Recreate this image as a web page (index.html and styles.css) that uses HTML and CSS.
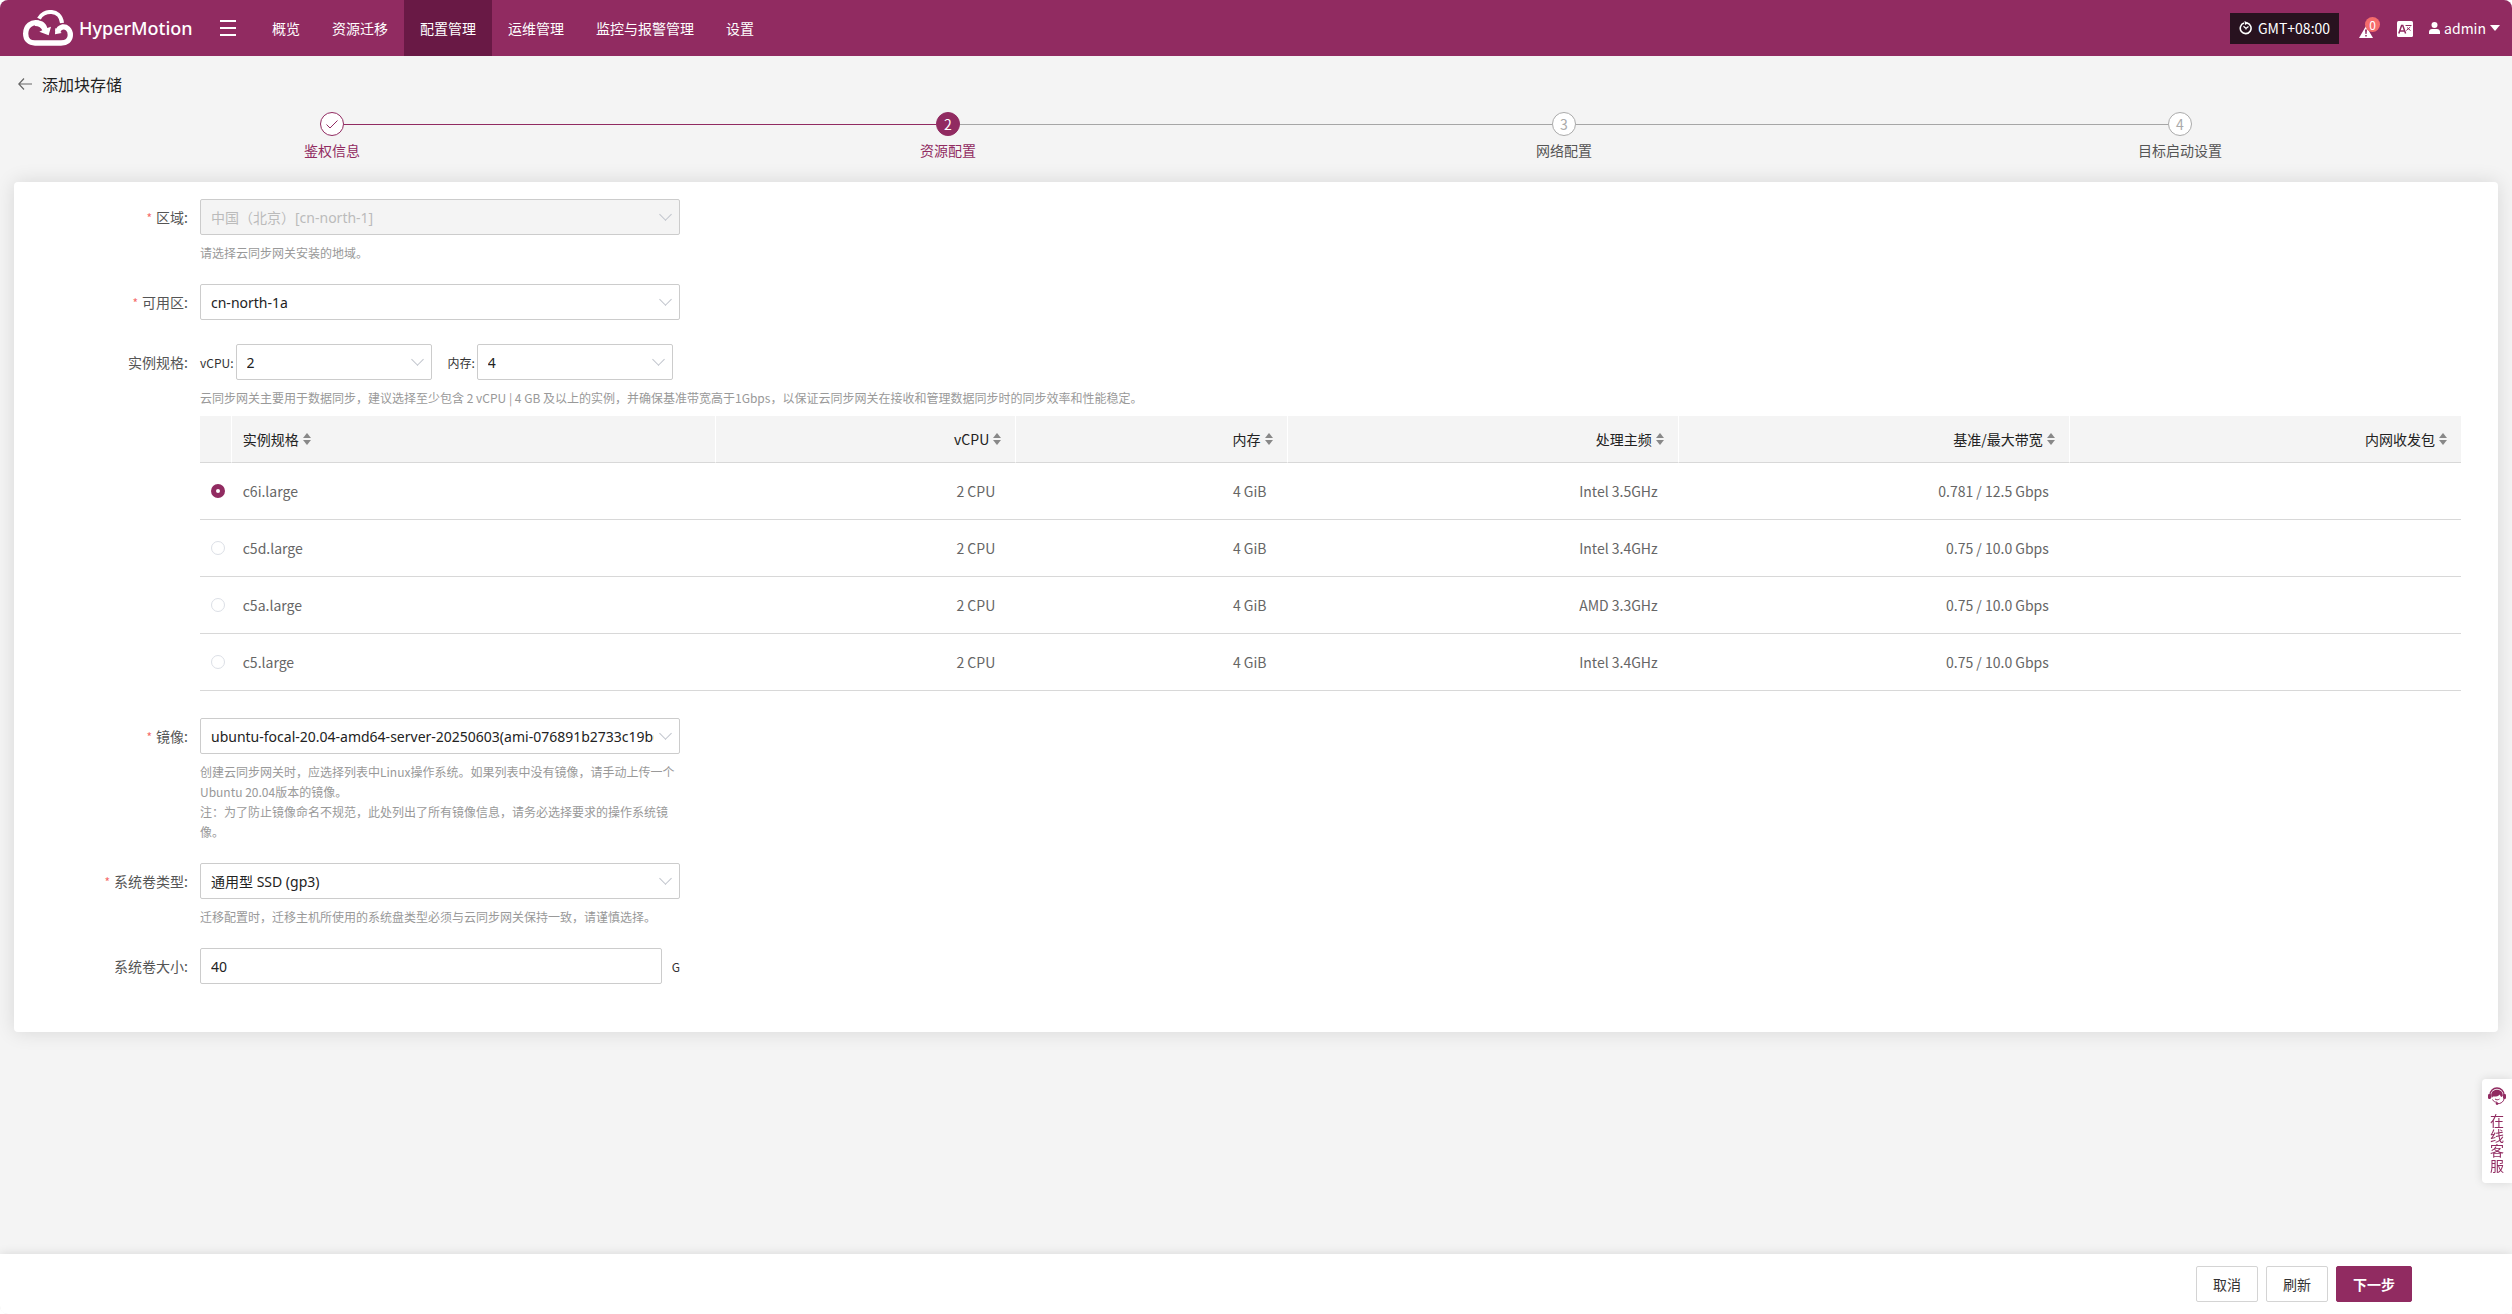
FILE: index.html
```
<!DOCTYPE html>
<html lang="zh-CN">
<head>
<meta charset="UTF-8">
<meta name="viewport" content="width=device-width, initial-scale=1.0">
<title>HyperMotion</title>
<link rel="stylesheet" href="styles.css">
</head>
<body>
<div class="app">
  <header class="header">
    <a class="logo" href="#">
      <svg width="50" height="36" viewBox="0 0 150 108" fill="none" stroke="#fff">
        <path d="M48 26C60 0 112-6 117 39" stroke-width="12"/>
        <path d="M46 39C26 34 8 48 8 71C8 88 19 99 36 99H114C131 99 142 90 142 75C142 58 130 49 118 51C110 53 106 58 104 65" stroke-width="16"/>
        <path d="M36 31C56 28 70 40 73 54L84 50L77 76L49 65L58 61C54 52 46 48 36 48Z" fill="#fff" stroke="none"/>
        <path d="M97 54L96 73L116 69Z" fill="#fff" stroke="none"/>
      </svg>
      <span>HyperMotion</span>
    </a>
    <button class="menu-btn" aria-label="菜单"><i></i><i></i><i></i></button>
    <nav class="nav">
      <a href="#">概览</a>
      <a href="#">资源迁移</a>
      <a href="#" class="active">配置管理</a>
      <a href="#">运维管理</a>
      <a href="#">监控与报警管理</a>
      <a href="#">设置</a>
    </nav>
    <div class="header-right">
      <button class="timezone">
        <svg width="14" height="14" viewBox="0 0 14 14" fill="none" stroke="#fff">
          <path d="M8 2A5.4 5.4 0 1 1 5 2.1" stroke-width="1.6"/>
          <path d="M5.5 0L9.5 2L6 4Z" fill="#fff" stroke="none"/>
          <path d="M4.5 5.2L7 7.5L9.5 5.5M7 7.5V8.5" stroke-width="1.2"/>
        </svg>
        GMT+08:00
      </button>
      <button class="alarm" aria-label="报警">
        <svg width="14" height="12" viewBox="0 0 14 12">
          <path d="M7 0L14 12H0Z" fill="#fff"/>
          <path d="M6 3.5H8L7.6 8H6.4ZM6.2 9H7.8V10.6H6.2Z" fill="#912b61"/>
        </svg>
        <span class="badge">0</span>
      </button>
      <button class="lang" aria-label="语言">
        <svg width="16" height="16" viewBox="0 0 16 16">
          <rect width="16" height="16" rx="1.5" fill="#fff"/>
          <path d="M1.8 12.5L4.6 4.5H5.8L8.6 12.5M2.8 10H7.6" fill="none" stroke="#912b61" stroke-width="1.5"/>
          <path d="M8.5 4.5H14.5M10 6.5L13.5 9.5M13.3 6L9.3 9.5" fill="none" stroke="#912b61"/>
        </svg>
      </button>
      <button class="user">
        <svg width="11" height="12" viewBox="0 0 11 12" fill="#fff">
          <circle cx="5.5" cy="3" r="3"/>
          <path d="M0 12V10C0 8 1.5 7 3 7H8C9.5 7 11 8 11 10V12Z"/>
        </svg>
        admin
        <i class="caret"></i>
      </button>
    </div>
  </header>

  <main class="main">
    <div class="page-title">
      <a href="#" class="back" aria-label="返回">
        <svg width="14" height="12" viewBox="0 0 14 12" fill="none" stroke="#666" stroke-width="1.2">
          <path d="M6 .5L.8 6L6 11.5M.8 6H14"/>
        </svg>
      </a>
      <h1>添加块存储</h1>
    </div>

    <ol class="steps">
      <li class="step done">
        <span class="step-icon">
          <svg width="12" height="9" viewBox="0 0 12 9" fill="none" stroke="#912b61"><path d="M.5 4.5L4 8L11.5 .5"/></svg>
        </span>
        <span class="step-title">鉴权信息</span>
      </li>
      <li class="step current">
        <span class="step-icon">2</span>
        <span class="step-title">资源配置</span>
      </li>
      <li class="step">
        <span class="step-icon">3</span>
        <span class="step-title">网络配置</span>
      </li>
      <li class="step">
        <span class="step-icon">4</span>
        <span class="step-title">目标启动设置</span>
      </li>
    </ol>

    <form class="card" id="storage-form">
      <div class="form-item">
        <label class="form-label required" for="region">区域:</label>
        <div class="form-content">
          <div class="select"><select id="region" disabled><option>中国（北京）[cn-north-1]</option></select></div>
          <p class="help">请选择云同步网关安装的地域。</p>
        </div>
      </div>

      <div class="form-item">
        <label class="form-label required" for="zone">可用区:</label>
        <div class="form-content">
          <div class="select"><select id="zone"><option>cn-north-1a</option></select></div>
        </div>
      </div>

      <div class="form-item">
        <span class="form-label">实例规格:</span>
        <div class="form-content">
          <div class="spec-filter">
            <label for="vcpu">vCPU:</label>
            <div class="select small"><select id="vcpu"><option>2</option></select></div>
            <label for="memory">内存:</label>
            <div class="select small"><select id="memory"><option>4</option></select></div>
          </div>
          <p class="help wide">云同步网关主要用于数据同步，建议选择至少包含 2 vCPU | 4 GB 及以上的实例，并确保基准带宽高于1Gbps，以保证云同步网关在接收和管理数据同步时的同步效率和性能稳定。</p>
          <table class="spec-table">
            <colgroup>
              <col>
              <col class="col-name">
              <col class="col-cpu">
              <col class="col-mem">
              <col class="col-wide">
              <col class="col-wide">
              <col class="col-wide">
            </colgroup>
            <thead>
              <tr>
                <th></th>
                <th>实例规格<i class="sort"></i></th>
                <th>vCPU<i class="sort"></i></th>
                <th>内存<i class="sort"></i></th>
                <th>处理主频<i class="sort"></i></th>
                <th>基准/最大带宽<i class="sort"></i></th>
                <th>内网收发包<i class="sort"></i></th>
              </tr>
            </thead>
            <tbody>
              <tr>
                <td><input type="radio" name="spec" id="c6i" checked></td>
                <td><label for="c6i">c6i.large</label></td>
                <td>2 CPU</td>
                <td>4 GiB</td>
                <td>Intel 3.5GHz</td>
                <td>0.781 / 12.5 Gbps</td>
                <td></td>
              </tr>
              <tr>
                <td><input type="radio" name="spec" id="c5d"></td>
                <td><label for="c5d">c5d.large</label></td>
                <td>2 CPU</td>
                <td>4 GiB</td>
                <td>Intel 3.4GHz</td>
                <td>0.75 / 10.0 Gbps</td>
                <td></td>
              </tr>
              <tr>
                <td><input type="radio" name="spec" id="c5a"></td>
                <td><label for="c5a">c5a.large</label></td>
                <td>2 CPU</td>
                <td>4 GiB</td>
                <td>AMD 3.3GHz</td>
                <td>0.75 / 10.0 Gbps</td>
                <td></td>
              </tr>
              <tr>
                <td><input type="radio" name="spec" id="c5"></td>
                <td><label for="c5">c5.large</label></td>
                <td>2 CPU</td>
                <td>4 GiB</td>
                <td>Intel 3.4GHz</td>
                <td>0.75 / 10.0 Gbps</td>
                <td></td>
              </tr>
            </tbody>
          </table>
        </div>
      </div>

      <div class="form-item">
        <label class="form-label required" for="image">镜像:</label>
        <div class="form-content">
          <div class="select"><select id="image"><option>ubuntu-focal-20.04-amd64-server-20250603(ami-076891b2733c19b6)</option></select></div>
          <p class="help">创建云同步网关时，应选择列表中Linux操作系统。如果列表中没有镜像，请手动上传一个Ubuntu 20.04版本的镜像。<br>注：为了防止镜像命名不规范，此处列出了所有镜像信息，请务必选择要求的操作系统镜像。</p>
        </div>
      </div>

      <div class="form-item">
        <label class="form-label required" for="volumeType">系统卷类型:</label>
        <div class="form-content">
          <div class="select"><select id="volumeType"><option>通用型 SSD (gp3)</option></select></div>
          <p class="help">迁移配置时，迁移主机所使用的系统盘类型必须与云同步网关保持一致，请谨慎选择。</p>
        </div>
      </div>

      <div class="form-item">
        <label class="form-label" for="volumeSize">系统卷大小:</label>
        <div class="form-content">
          <div class="size-row">
            <input type="text" id="volumeSize" value="40">
            <span>G</span>
          </div>
        </div>
      </div>
    </form>
  </main>

  <footer class="footer">
    <button>取消</button>
    <button>刷新</button>
    <button class="primary" form="storage-form">下一步</button>
  </footer>

  <a href="#" class="service">
    <svg width="18" height="18" viewBox="0 0 18 18">
      <path d="M2 8A7 7 0 0 1 16 8" fill="none" stroke="#912b61" stroke-width="1.4"/>
      <path d="M3.2 9C3 5 5.5 2.8 9 2.8S15 5 14.8 9L13.5 10C12.5 9.5 12 8.5 12 7.5C10 9.5 7 9.8 5 9.5L3.8 11Z" fill="#912b61"/>
      <rect x="0" y="7" width="3" height="5" rx="1.2" fill="#912b61"/>
      <rect x="15" y="7" width="3" height="5" rx="1.2" fill="#912b61"/>
      <path d="M4.5 12.5C5.5 14.5 7 15.2 9 15.2M16.2 11.5C15.5 15 13 16.8 9 16.8M7 12C8.5 13 10 13 11.5 12" fill="none" stroke="#912b61"/>
      <circle cx="9" cy="16.6" r="1.3" fill="#912b61"/>
    </svg>
    <span>在线客服</span>
  </a>
</div>
</body>
</html>
```
FILE: styles.css
```
* {
  box-sizing: border-box;
}

body {
  margin: 0;
  background-color: #fff;
  color: #333;
  font-family: "Noto Sans CJK SC", sans-serif;
  font-size: 14px;
}

button,
input,
select {
  font-family: inherit;
  font-size: 14px;
}

button {
  cursor: pointer;
}

a {
  color: inherit;
  text-decoration: none;
}

.app {
  display: flex;
  flex-direction: column;
  min-height: 100vh;
  background-color: #f4f4f4;
  border-radius: 8px;
  overflow: hidden;
}

/* header */
.header {
  display: flex;
  align-items: center;
  height: 56px;
  padding: 0 12px 0 23px;
  background-color: #912b61;
  color: #fff;
}

.header button {
  display: flex;
  align-items: center;
  padding: 0;
  border: none;
  background: none;
  color: #fff;
}

.logo {
  display: flex;
  align-items: center;
  gap: 6px;
  width: 197px;
  font-family: "Noto Sans", sans-serif;
  font-size: 18px;
  font-weight: 500;
}

.header .menu-btn {
  flex-direction: column;
  gap: 5px;
  width: 16px;
  margin-right: 20px;
}

.menu-btn i {
  width: 16px;
  height: 2px;
  background-color: #fff;
}

.nav {
  display: flex;
}

.nav a {
  padding: 0 16px;
  line-height: 56px;
}

.nav .active {
  background-color: #691945;
}

.header-right {
  display: flex;
  align-items: center;
  margin-left: auto;
}

.header .timezone {
  gap: 5px;
  height: 31px;
  padding: 0 9px;
  margin-right: 20px;
  background-color: #28121f;
}

.alarm {
  position: relative;
  height: 20px;
  margin-right: 24px;
}

.alarm svg {
  margin-top: 8px;
}

.badge {
  position: absolute;
  top: -1px;
  left: 6px;
  width: 15px;
  height: 15px;
  border-radius: 8px;
  background-color: #f56c6c;
  font-size: 12px;
  line-height: 15px;
  text-align: center;
}

.header .lang {
  margin: 2px 16px 0 0;
}

.header .user {
  gap: 4px;
}

.caret {
  border: 5px solid transparent;
  border-top: 6px solid #fff;
  border-bottom: 0;
}

/* page */
.main {
  padding: 0 14px;
}

.page-title {
  display: flex;
  align-items: center;
  gap: 10px;
  height: 56px;
  padding: 0 4px;
}

.page-title h1 {
  margin: 0;
  color: #222;
  font-size: 16px;
  font-weight: 400;
}

.back {
  display: flex;
}

.steps {
  display: flex;
  margin: 0;
  padding: 0 10px;
  height: 70px;
  list-style: none;
}

.step {
  display: flex;
  flex: 1;
  flex-direction: column;
  align-items: center;
  position: relative;
  color: #555;
}

/* connector between two steps */
.step:not(:last-child)::after {
  content: "";
  position: absolute;
  top: 12px;
  left: calc(50% + 12px);
  width: calc(100% - 24px);
  height: 1px;
  background-color: #a6a6a6;
}

.step.done::after {
  background-color: #912b61;
}

.step-icon {
  display: flex;
  align-items: center;
  justify-content: center;
  width: 24px;
  height: 24px;
  border: 1px solid #aaa;
  border-radius: 50%;
  background-color: #fff;
  color: #aaa;
}

.step-title {
  margin-top: 4px;
  line-height: 20px;
}

.done,
.current {
  color: #912b61;
}

.done .step-icon {
  border-color: #912b61;
}

.current .step-icon {
  border-color: #912b61;
  background-color: #912b61;
  color: #fff;
}

.card {
  padding: 17px 37px 24px 0;
  border-radius: 4px;
  background-color: #fff;
  box-shadow: 0 0 20px rgba(0, 0, 0, 0.12);
}

/* form */
.form-item {
  display: grid;
  grid-template-columns: 186px 1fr;
  margin-bottom: 24px;
}

.form-label {
  padding-right: 12px;
  color: #555;
  line-height: 36px;
  text-align: right;
}

.required::before {
  content: "*";
  margin-right: 4px;
  color: #f56c6c;
  font-size: 12px;
  line-height: 1;
}

.form-content {
  min-width: 0;
}

.select {
  position: relative;
  width: 480px;
}

.select::after {
  content: "";
  position: absolute;
  top: 11px;
  right: 10px;
  width: 8px;
  height: 8px;
  border: solid #c0c4cc;
  border-width: 0 1px 1px 0;
  transform: rotate(45deg);
  pointer-events: none;
}

.select.small {
  width: 196px;
}

select,
input[type="text"] {
  display: block;
  width: 100%;
  height: 36px;
  padding: 0 25px 0 10px;
  border: 1px solid #ccc;
  border-radius: 2px;
  background-color: #fff;
  color: #222;
  font-family: "Noto Sans", "Noto Sans CJK SC", sans-serif;
  appearance: none;
}

select:disabled {
  background-color: #f4f4f4;
  color: #bbb;
  opacity: 1;
}

.help {
  width: 480px;
  margin: 8px 0 -3px;
  color: #999;
  font-size: 12px;
  line-height: 20px;
}

.help.wide {
  width: auto;
}

.spec-filter {
  display: flex;
  align-items: center;
  font-size: 12px;
}

.spec-filter label {
  margin-right: 2px;
}

.spec-filter .select + label {
  margin-left: 16px;
}

.size-row {
  display: flex;
  align-items: center;
  justify-content: space-between;
  width: 480px;
  font-size: 12px;
}

.size-row input {
  width: 462px;
}

/* spec table */
.spec-table {
  width: 100%;
  margin: 11px 0 3px;
  border-collapse: separate;
  border-spacing: 0;
  table-layout: fixed;
}

.col-name {
  width: 21.4%;
}

.col-cpu {
  width: 13.3%;
}

.col-mem {
  width: 12%;
}

.col-wide {
  width: 17.3%;
}

.spec-table th {
  height: 47px;
  padding: 0 14px 0 11px;
  border-right: 1px solid #fff;
  border-bottom: 1px solid #d8d8d8;
  background-color: #f4f4f4;
  color: #222;
  font-weight: 400;
  text-align: right;
}

.spec-table th:last-child {
  border-right: 0;
}

.spec-table td {
  height: 57px;
  padding: 0 21px 0 11px;
  border-bottom: 1px solid #d8d8d8;
  color: #666;
  text-align: right;
}

.spec-table th:nth-child(2),
.spec-table td:nth-child(2) {
  text-align: left;
}

.spec-table td:first-child {
  padding: 0 0 0 11px;
  text-align: left;
}

.sort {
  display: inline-block;
  width: 8px;
  height: 12px;
  margin-left: 4px;
}

.sort::before,
.sort::after {
  content: "";
  display: block;
  border: 4px solid transparent;
}

.sort::before {
  border-top: 0;
  border-bottom: 5px solid #888;
}

.sort::after {
  margin-top: 2px;
  border-top: 5px solid #888;
  border-bottom: 0;
}

input[type="radio"] {
  display: block;
  width: 14px;
  height: 14px;
  margin: 0;
  border: 1px solid #dcdfe6;
  border-radius: 50%;
  background-color: #fff;
  appearance: none;
}

input[type="radio"]:checked {
  border: 5px solid #912b61;
}

/* footer */
.footer {
  display: flex;
  justify-content: flex-end;
  gap: 8px;
  margin-top: auto;
  padding: 12px 100px 12px 0;
  background-color: #fff;
  box-shadow: 0 0 10px rgba(0, 0, 0, 0.12);
}

.footer button {
  height: 36px;
  padding: 0 16px;
  border: 1px solid #d4d4d4;
  border-radius: 2px;
  background-color: #fff;
  color: #333;
}

.footer .primary {
  border-color: #912b61;
  background-color: #912b61;
  color: #fff;
  font-weight: 700;
}

.service {
  position: fixed;
  right: 0;
  bottom: 131px;
  display: flex;
  flex-direction: column;
  align-items: center;
  width: 30px;
  padding: 8px 6px 10px;
  border-radius: 4px 0 0 4px;
  background-color: #fff;
  box-shadow: 0 0 10px rgba(0, 0, 0, 0.12);
  color: #912b61;
  line-height: 15px;
}

.service span {
  width: 14px;
  margin-top: 8px;
}
```
